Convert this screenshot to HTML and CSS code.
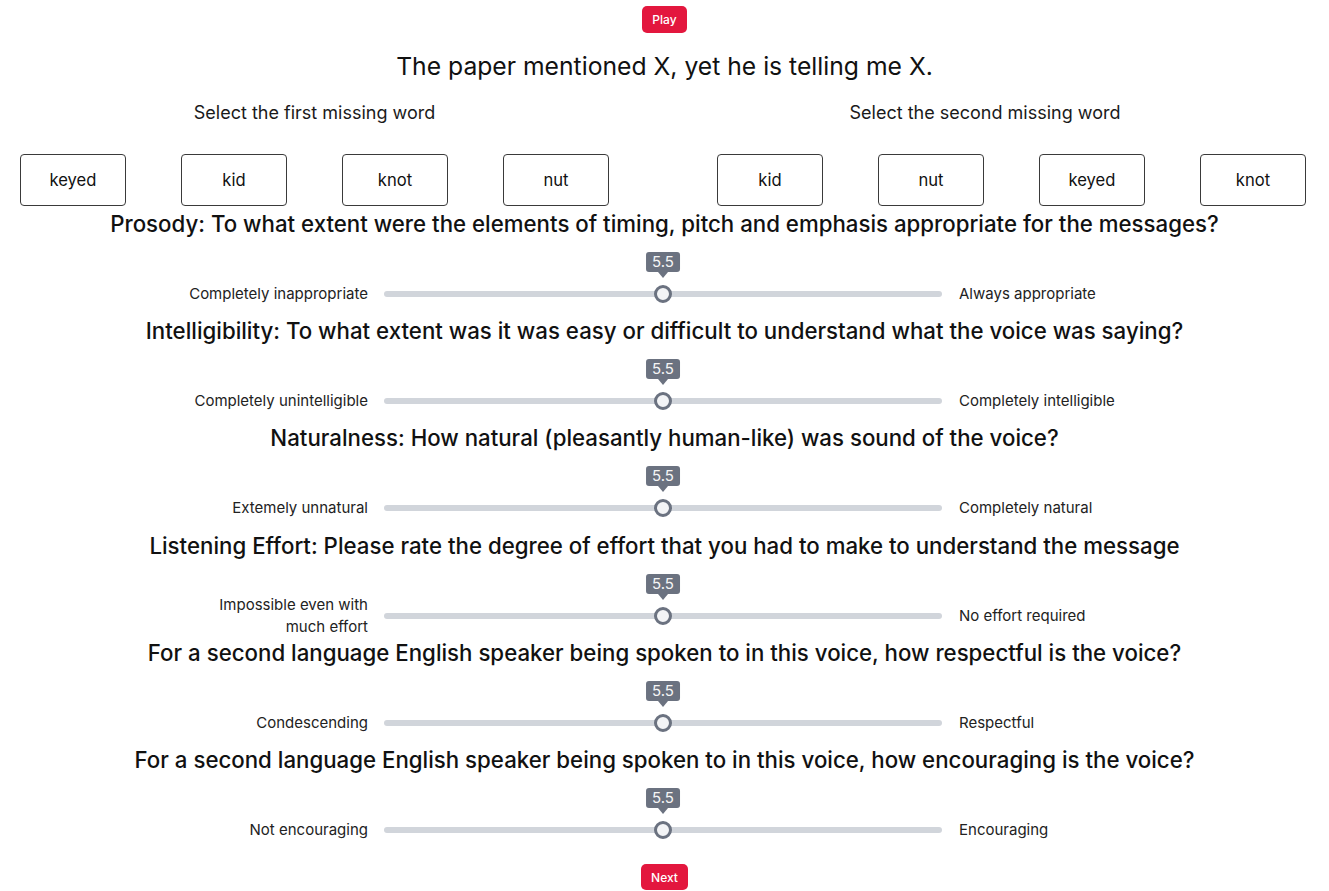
FILE: index.html
```html
<!DOCTYPE html>
<html lang="en">
<head>
<meta charset="utf-8">
<title>Listening test</title>
<link rel="stylesheet" href="styles.css">
</head>
<body>
<main class="page">
  <div class="center"><button class="btn-red btn-play">Play</button></div>
  <h1 class="sentence">The paper mentioned X, yet he is telling me X.</h1>
  <div class="select-row">
    <div class="select-title">Select the first missing word</div>
    <div class="select-title">Select the second missing word</div>
  </div>
  <div class="words">
    <div class="word-group">
      <button class="word">keyed</button>
      <button class="word">kid</button>
      <button class="word">knot</button>
      <button class="word">nut</button>
    </div>
    <div class="word-group">
      <button class="word">kid</button>
      <button class="word">nut</button>
      <button class="word">keyed</button>
      <button class="word">knot</button>
    </div>
  </div>

  <section class="question">
    <h2 class="q-title">Prosody: To what extent were the elements of timing, pitch and emphasis appropriate for the messages?</h2>
    <div class="slider-row">
      <div class="label-left">Completely inappropriate</div>
      <div class="track"><div class="thumb"><span class="tip">5.5</span></div></div>
      <div class="label-right">Always appropriate</div>
    </div>
  </section>

  <section class="question">
    <h2 class="q-title">Intelligibility: To what extent was it was easy or difficult to understand what the voice was saying?</h2>
    <div class="slider-row">
      <div class="label-left">Completely unintelligible</div>
      <div class="track"><div class="thumb"><span class="tip">5.5</span></div></div>
      <div class="label-right">Completely intelligible</div>
    </div>
  </section>

  <section class="question">
    <h2 class="q-title">Naturalness: How natural (pleasantly human-like) was sound of the voice?</h2>
    <div class="slider-row">
      <div class="label-left">Extemely unnatural</div>
      <div class="track"><div class="thumb"><span class="tip">5.5</span></div></div>
      <div class="label-right">Completely natural</div>
    </div>
  </section>

  <section class="question">
    <h2 class="q-title">Listening Effort: Please rate the degree of effort that you had to make to understand the message</h2>
    <div class="slider-row">
      <div class="label-left">Impossible even with much effort</div>
      <div class="track"><div class="thumb"><span class="tip">5.5</span></div></div>
      <div class="label-right">No effort required</div>
    </div>
  </section>

  <section class="question">
    <h2 class="q-title">For a second language English speaker being spoken to in this voice, how respectful is the voice?</h2>
    <div class="slider-row">
      <div class="label-left">Condescending</div>
      <div class="track"><div class="thumb"><span class="tip">5.5</span></div></div>
      <div class="label-right">Respectful</div>
    </div>
  </section>

  <section class="question">
    <h2 class="q-title">For a second language English speaker being spoken to in this voice, how encouraging is the voice?</h2>
    <div class="slider-row">
      <div class="label-left">Not encouraging</div>
      <div class="track"><div class="thumb"><span class="tip">5.5</span></div></div>
      <div class="label-right">Encouraging</div>
    </div>
  </section>

  <div class="center next-wrap"><button class="btn-red btn-next">Next</button></div>
</main>
</body>
</html>
```

FILE: styles.css
```css
* { box-sizing: border-box; }
html, body { margin: 0; padding: 0; background: #ffffff; }
body {
  font-family: Inter, "Noto Sans", "Liberation Sans", sans-serif;
  color: #111111;
}
.page { padding-top: 6px; }
.center { display: flex; justify-content: center; }

.btn-red {
  background: #e3173e;
  color: #ffffff;
  border: none;
  border-radius: 5px;
  font-family: inherit;
  font-size: 12px;
  font-weight: 500;
  height: 27px;
  padding: 0;
  cursor: pointer;
}
.btn-play { width: 45px; }
.btn-next { width: 47px; height: 26px; }
.next-wrap { margin-top: 15px; }

.sentence {
  margin: 17px 0 0;
  text-align: center;
  font-size: 24.7px;
  line-height: 32px;
  font-weight: 400;
  color: #111;
}

.select-row {
  display: grid;
  grid-template-columns: 629px 1fr;
  column-gap: 12px;
  margin-top: 19px;
}
.select-title {
  text-align: center;
  font-size: 18px;
  line-height: 24px;
  color: #1a1a1a;
}

.words {
  display: flex;
  gap: 108px;
  padding-left: 20px;
  margin-top: 29px;
}
.word-group { display: flex; gap: 55px; }
.word {
  width: 106px;
  height: 52px;
  background: #ffffff;
  border: 1px solid #3a3a3a;
  border-radius: 4px;
  font-family: inherit;
  font-size: 16.6px;
  color: #111;
  cursor: pointer;
}

.question { padding-top: 1px; }
.q-title {
  margin: 0;
  text-align: center;
  font-size: 22.25px;
  line-height: 34px;
  font-weight: 500;
  color: #111;
}

.slider-row {
  display: flex;
  align-items: center;
  justify-content: center;
  gap: 16px;
  height: 38.2px;
  margin-top: 34px;
  padding-right: 3px;
}
.label-left, .label-right {
  width: 184px;
  font-size: 15px;
  line-height: 22px;
  color: #222;
}
.label-left { text-align: right; }
.label-right { text-align: left; padding-left: 1px; }

.track {
  position: relative;
  width: 558px;
  height: 6px;
  border-radius: 3px;
  background: #d1d5db;
}
.thumb {
  position: absolute;
  left: 270px;
  top: -6px;
  width: 18px;
  height: 18px;
  border-radius: 50%;
  background: #f3f4f6;
  border: 3px solid #6b7280;
}
.tip {
  position: absolute;
  bottom: 28px;
  left: 50%;
  transform: translateX(-50%);
  background: #6b7280;
  color: #f5f5f5;
  font-size: 15px;
  line-height: 20px;
  height: 20px;
  padding: 0 6px;
  border-radius: 3px;
  white-space: nowrap;
}
.tip::after {
  content: "";
  position: absolute;
  left: 50%;
  top: 100%;
  margin-left: -5px;
  border-left: 5px solid transparent;
  border-right: 5px solid transparent;
  border-top: 6px solid #6b7280;
}
```
